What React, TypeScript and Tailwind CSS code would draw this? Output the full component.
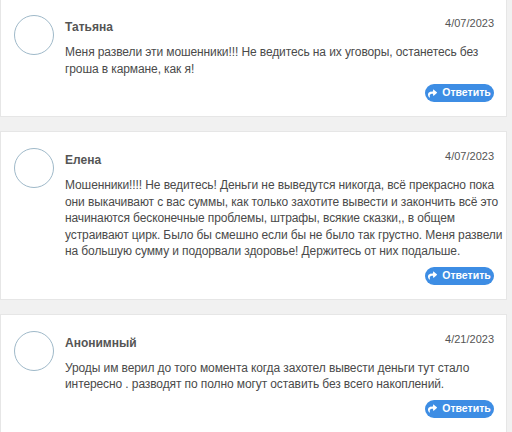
import React from "react";
import { FaShare } from "react-icons/fa";

type C = { name: string; date: string; lines: string[] };

const comments: C[] = [
  {
    name: "Татьяна",
    date: "4/07/2023",
    lines: [
      "Меня развели эти мошенники!!! Не ведитесь на их уговоры, останетесь без",
      "гроша в кармане, как я!",
    ],
  },
  {
    name: "Елена",
    date: "4/07/2023",
    lines: [
      "Мошенники!!!! Не ведитесь! Деньги не выведутся никогда, всё прекрасно пока",
      "они выкачивают с вас суммы, как только захотите вывести и закончить всё это",
      "начинаются бесконечные проблемы, штрафы, всякие сказки,, в общем",
      "устраивают цирк. Было бы смешно если бы не было так грустно. Меня развели",
      "на большую сумму и подорвали здоровье! Держитесь от них подальше.",
    ],
  },
  {
    name: "Анонимный",
    date: "4/21/2023",
    lines: [
      "Уроды им верил до того момента когда захотел вывести деньги тут стало",
      "интересно . разводят по полно могут оставить без всего накоплений.",
    ],
  },
];

function Card({ c }: { c: C }) {
  return (
    <div className="bg-white border border-[#e6e6e6] flex pt-[16px] pb-[14px] pl-[13px] pr-[12px]">
      <div className="w-[40px] h-[40px] rounded-full border border-[#9fb9c9] shrink-0" />
      <div className="flex-1 min-w-0 ml-[11px] flex flex-col">
        <div className="flex justify-between items-start h-[29px]">
          <div className="text-[12px] font-bold text-[#555] mt-[4px] leading-[16px]">{c.name}</div>
          <div className="text-[11px] text-[#555] leading-[14px] mt-[1px]">{c.date}</div>
        </div>
        <div className="text-[12px] tracking-[-0.1px] text-[#4a4a4a] leading-[16.5px]">
          {c.lines.map((l, i) => (
            <div key={i} className="whitespace-nowrap">
              {l}
            </div>
          ))}
        </div>
        <div className="flex justify-end mt-[7px]">
          <button className="h-[18px] w-[69px] rounded-full bg-[#3d8de4] text-white text-[10.5px] font-bold flex items-center justify-center gap-[5px]">
            <FaShare className="w-[9px] h-[9px]" />
            <span>Ответить</span>
          </button>
        </div>
      </div>
    </div>
  );
}

export default function App() {
  return (
    <div
      className="w-[512px] h-[432px] overflow-hidden bg-[#f1f1f1]"
      style={{ fontFamily: '"Liberation Sans", Arial, sans-serif' }}
    >
      <div className="w-[507px] -mt-[2px] flex flex-col gap-[14px]">
        {comments.map((c, i) => (
          <Card key={i} c={c} />
        ))}
      </div>
    </div>
  );
}
